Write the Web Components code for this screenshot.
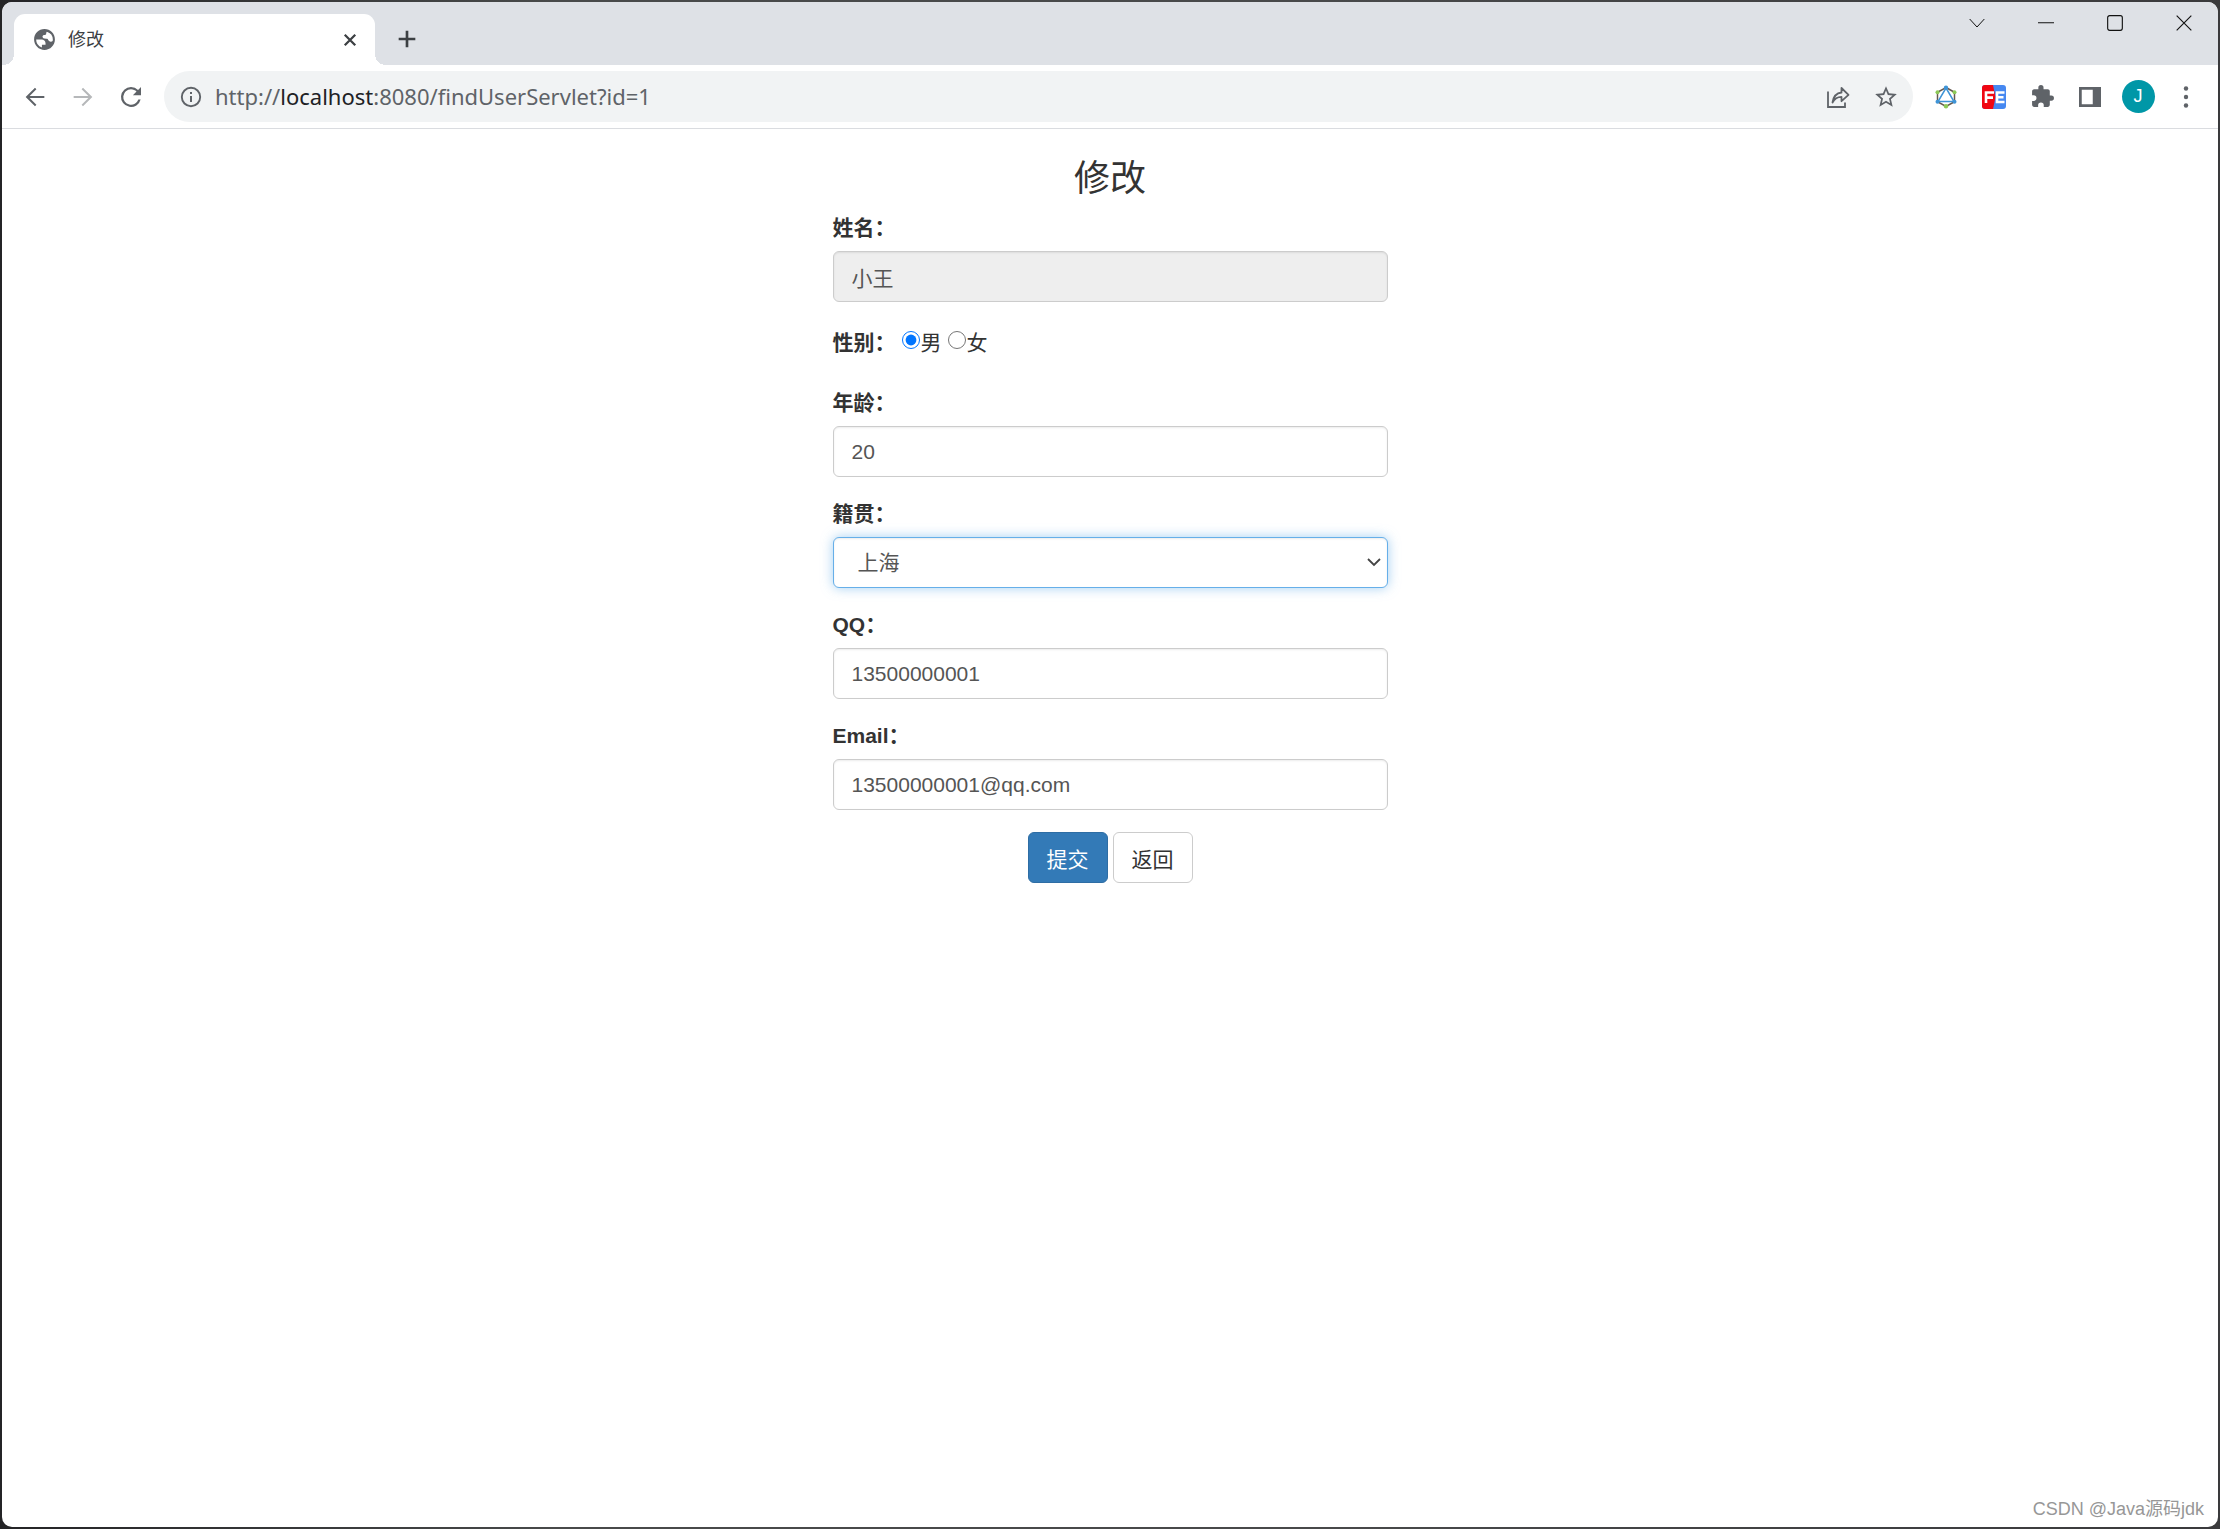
<!DOCTYPE html>
<html lang="zh-CN">
<head>
<meta charset="utf-8">
<title>修改</title>
<style>
  body {
    margin: 0;
    font-family: "Liberation Sans", "Noto Sans CJK SC", sans-serif;
    background: linear-gradient(90deg, #242426, #484a4a 25%, #48494a 60%, #3a3a3c);
  }
</style>
</head>
<body>
<browser-window>
  <tab-strip slot="tabs" label="修改"></tab-strip>
  <tool-bar slot="toolbar"></tool-bar>
  <edit-form>
    <form-field kind="text" label="姓名：" value="小王" readonly></form-field>
    <gender-field></gender-field>
    <form-field kind="text" label="年龄：" value="20"></form-field>
    <form-field kind="select" label="籍贯：" value="上海"></form-field>
    <form-field kind="text" label="QQ：" value="13500000001"></form-field>
    <form-field kind="text" label="Email：" value="13500000001@qq.com"></form-field>
  </edit-form>
  <span slot="mark">CSDN @Java源码jdk</span>
</browser-window>

<script>
const icons = {
  globe: [25, '<path fill="currentColor" d="M12 2C6.48 2 2 6.48 2 12s4.48 10 10 10 10-4.48 10-10S17.52 2 12 2zM4 12h4.4c3.4.02 4.93 1.73 4.6 5.1H9.500v2.500A8 8 0 0 1 4 12zm16 0a8 8 0 0 1-.16 1.500c-.9.9-2.500.8-3.500 0-1-.8-.8-2-1.900-2.200-1.500-.1-2.700 0-3.700-.7-.9-.7-.9-1.900 0-2.600 1-.7 2.300-.2 2.800-1.100.3-.7-.2-1.500.7-2.400A8 8 0 0 1 20 12z"/>'],
  close: [18, '<path d="M5 5l14 14M19 5L5 19" stroke="currentColor" stroke-width="3"/>'],
  plus: [20, '<path d="M2 12h20M12 2v20" stroke="currentColor" stroke-width="3.200"/>'],
  back: [28, '<path fill="currentColor" d="M20 11.150H7.400l5.800-5.800L12 4.100 4 12l8 7.900 1.200-1.200-5.800-5.850H20z"/>'],
  forward: [28, '<path fill="currentColor" d="M4 11.150h12.600l-5.800-5.800L12 4.100 20 12l-8 7.900-1.200-1.200 5.800-5.850H4z"/>'],
  reload: [30, '<path fill="currentColor" d="M17.650 6.350A7.960 7.960 0 0 0 12 4a8 8 0 1 0 7.730 10h-1.850A6.200 6.200 0 1 1 12 5.800c1.750 0 3.300.75 4.420 1.850L13.500 10.500H20V4z"/>'],
  info: [24, '<circle cx="12" cy="12" r="9.200" fill="none" stroke="currentColor" stroke-width="1.900"/><path fill="currentColor" d="M11 11h2v6h-2zM11 7h2v2h-2z"/>'],
  share: [24, '<g fill="none" stroke="currentColor" stroke-width="1.800"><path d="M2 6.500V22h17v-4.500"/><path d="M6.500 17.500C7.500 11 11 8 15.500 7.500V3l7 6.800-7 6.400v-4.300c-4.500 0-7 1.800-9 5.600z" stroke-linejoin="round"/></g>'],
  star: [26, '<path fill="currentColor" d="M22 9.240l-7.190-.62L12 2 9.190 8.630 2 9.240l5.460 4.730L5.820 21 12 17.270 18.180 21l-1.630-7.030zM12 15.400l-3.760 2.270 1-4.280-3.320-2.880 4.380-.38L12 6.100l1.710 4.040 4.380.38-3.320 2.880 1 4.280z"/>'],
  graph: [24, '<path d="M12 2.500l8.500 4.800v9.400L12 21.500l-8.500-4.800V7.300z" fill="none" stroke="#66594f" stroke-width="1.500"/><path d="M12 3L20 16.500H4z" fill="#fff" stroke="#3f94d6" stroke-width="1.500"/><g fill="#3f94d6"><circle cx="12" cy="2.800" r="2.200"/><circle cx="3.500" cy="16.700" r="2"/><circle cx="20.500" cy="16.700" r="2"/></g><g fill="#8cc957"><circle cx="3.500" cy="7.300" r="2"/><circle cx="20.500" cy="7.300" r="2"/><circle cx="12" cy="21.300" r="2.200"/></g>'],
  fe: [24, '<rect width="24" height="24" rx="3" fill="#4688f1"/><path d="M3 0h8l2.500 12L11 24H3a3 3 0 0 1-3-3V3a3 3 0 0 1 3-3z" fill="#f00713"/><path d="M4 18V7.500h8M4 12.600h7M22.500 7.500H15V17h7.500M15 12.300h6.500" fill="none" stroke="#fff" stroke-width="2.600"/>'],
  puzzle: [25, '<path fill="currentColor" d="M20.500 11H19V7c0-1.100-.9-2-2-2h-4V3.500a2.500 2.500 0 0 0-5 0V5H4c-1.100 0-2 .9-2 2v3.800h1.500a2.700 2.700 0 0 1 0 5.400H2V20c0 1.100.9 2 2 2h3.800v-1.500a2.700 2.700 0 0 1 5.400 0V22H17c1.100 0 2-.9 2-2v-4h1.500a2.500 2.500 0 0 0 0-5z"/>'],
  panel: [22, '<path fill="currentColor" fill-rule="evenodd" d="M0 1h24v22H0zM3 4v16h12V4z"/>'],
  dots: [22, '<g fill="currentColor"><circle cx="12" cy="2.800" r="2.400"/><circle cx="12" cy="12" r="2.400"/><circle cx="12" cy="21.200" r="2.400"/></g>'],
  chevron: [16, '<path d="M1 6l11 12L23 6" fill="none" stroke="currentColor" stroke-width="1.500"/>'],
  minimize: [16, '<path d="M0 11.500h24" stroke="currentColor" stroke-width="1.600"/>'],
  maximize: [16, '<rect x="1" y="1" width="22" height="22" rx="3" fill="none" stroke="currentColor" stroke-width="1.700"/>'],
  quit: [16, '<path d="M1 1l22 22M23 1L1 23" stroke="currentColor" stroke-width="1.700"/>'],
  arrow: [12, '<path d="M0 6l12 12L24 6" fill="none" stroke="currentColor" stroke-width="3.600"/>']
};

class Base extends HTMLElement {
  connectedCallback() {
    if (this.shadowRoot) return;
    this.attachShadow({ mode: 'open' }).innerHTML =
      '<style>*, ::before, ::after { box-sizing: border-box; } button { font: inherit; cursor: pointer; }' + this.css() + '</style>' + this.html();
  }
}

customElements.define('ui-icon', class extends Base {
  css() { return ':host { display: inline-flex; flex: none; } svg { display: block; overflow: visible; }'; }
  html() {
    const [size, body] = icons[this.getAttribute('name')];
    return `<svg width="${size}" height="${size}" viewBox="0 0 24 24" aria-hidden="true">${body}</svg>`;
  }
});

customElements.define('icon-button', class extends Base {
  css() {
    return `:host { display: flex; flex: none; width: 48px; height: 48px; color: #5f6368; }
      button { display: flex; flex: 1; align-items: center; justify-content: center; padding: 0; border: 0; background: none; color: inherit; }`;
  }
  html() {
    return `<button type="button" aria-label="${this.getAttribute('label')}"><ui-icon name="${this.getAttribute('icon')}"></ui-icon></button>`;
  }
});

customElements.define('browser-window', class extends Base {
  css() {
    return `:host { display: block; box-sizing: border-box; height: 100vh; padding: 2px; }
      .frame { position: relative; display: flex; flex-direction: column; height: 100%; overflow: hidden; border-radius: 10px; background: #fff; }
      main { flex: 1; }
      .mark { position: absolute; right: 14px; bottom: 4px; font-size: 18px; line-height: 28px; color: #979797; }`;
  }
  html() {
    return `<div class="frame"><slot name="tabs"></slot><slot name="toolbar"></slot><main><slot></slot></main>
      <div class="mark"><slot name="mark"></slot></div></div>`;
  }
});

customElements.define('tab-strip', class extends Base {
  css() {
    return `:host { display: flex; box-sizing: border-box; height: 63px; padding-left: 12px; background: #dee1e6; color: #3c4043; }
      .tab { position: relative; display: flex; align-items: center; width: 361px; margin-top: 12px; padding: 0 1px 0 18px; border-radius: 11px 11px 0 0; background: #fff; }
      .tab::before, .tab::after { content: ""; position: absolute; bottom: 0; width: 11px; height: 11px; }
      .tab::before { left: -11px; background: radial-gradient(circle at 0 0, transparent 11px, #fff 11px); }
      .tab::after { right: -11px; background: radial-gradient(circle at 100% 0, transparent 11px, #fff 11px); }
      .globe { color: #5f6368; }
      .title { flex: 1; margin-left: 11px; font-size: 18px; line-height: 26px; }
      .tab icon-button { color: #3c4043; }
      .new { margin: 13px 0 0 8px; color: #3c4043; }
      .controls { display: flex; margin-left: auto; }
      .controls icon-button { width: 69px; height: 41px; color: #111; }`;
  }
  html() {
    return `<div class="tab" role="tab"><ui-icon class="globe" name="globe"></ui-icon><span class="title">${this.getAttribute('label')}</span>
        <icon-button icon="close" label="关闭标签页"></icon-button></div>
      <icon-button class="new" icon="plus" label="新标签页"></icon-button>
      <div class="controls">
        <icon-button icon="chevron" label="搜索标签页"></icon-button>
        <icon-button icon="minimize" label="最小化"></icon-button>
        <icon-button icon="maximize" label="最大化"></icon-button>
        <icon-button icon="quit" label="关闭"></icon-button>
      </div>`;
  }
});

customElements.define('tool-bar', class extends Base {
  css() {
    return `:host { display: flex; align-items: center; padding: 6px 8px 6px 9px; border-bottom: 1px solid #dadce0; }
      .omnibox { display: flex; flex: 1; align-items: center; height: 51px; margin: 0 9px; padding: 0 3px 0 15px; border-radius: 26px; background: #f1f3f4; color: #5f6368; }
      .url { flex: 1; margin-left: 12px; padding-bottom: 2px; font: 22px/30px "Noto Sans", sans-serif; outline: 0; white-space: nowrap; }
      b { font-weight: 400; color: #202124; }
      .off { color: #b6b8ba; }
      .user { display: flex; justify-content: center; width: 48px; padding: 0; border: 0; background: none; }
      .user span { width: 33px; height: 33px; border-radius: 50%; background: #0097a7; color: #fff; font-size: 18px; line-height: 33px; }`;
  }
  html() {
    return `<icon-button icon="back" label="后退"></icon-button>
      <icon-button class="off" icon="forward" label="前进"></icon-button>
      <icon-button icon="reload" label="刷新"></icon-button>
      <div class="omnibox"><ui-icon name="info"></ui-icon>
        <div class="url" role="textbox" contenteditable="true" spellcheck="false" aria-label="地址栏">http://<b>localhost</b>:8080/findUserServlet?id=1</div>
        <icon-button icon="share" label="分享"></icon-button>
        <icon-button icon="star" label="收藏"></icon-button></div>
      <icon-button icon="graph" label="GraphQL"></icon-button>
      <icon-button icon="fe" label="FeHelper"></icon-button>
      <icon-button icon="puzzle" label="扩展程序"></icon-button>
      <icon-button icon="panel" label="侧边栏"></icon-button>
      <button class="user" type="button"><span>J</span></button>
      <icon-button icon="dots" label="菜单"></icon-button>`;
  }
});

customElements.define('edit-form', class extends Base {
  css() {
    return `:host { display: block; width: 25vw; min-width: 320px; margin: 0 auto; color: #333; }
      h3 { margin: 30px 0 15px; font-size: 36px; line-height: 39px; font-weight: 400; text-align: center; }
      .actions { display: flex; justify-content: center; gap: 5px; }
      .actions button { height: 51px; padding: 0 18px; border: 1px solid #ccc; border-radius: 6px; background: #fff; color: #333; font-size: 21px; }
      .actions .primary { border-color: #2e6da4; background: #337ab7; color: #fff; }`;
  }
  html() {
    return `<h3>修改</h3><form onsubmit="return false"><slot></slot>
      <div class="actions"><button class="primary" type="submit">提交</button><button type="button">返回</button></div></form>`;
  }
});

customElements.define('form-field', class extends Base {
  css() {
    return `:host { display: block; margin-bottom: 22px; font-size: 21px; line-height: 30px; }
      label { display: block; margin-bottom: 8px; font-weight: 700; }
      .box { position: relative; }
      input, select { display: block; width: 100%; height: 51px; padding: 0 18px; border: 1px solid #ccc; border-radius: 6px; outline: 0; background: #fff; color: #555; font: inherit; box-shadow: inset 0 1px 2px rgba(0, 0, 0, .08); }
      input[readonly] { background: #eee; }
      select { appearance: none; padding: 0 24px; border-color: #66afe9; box-shadow: inset 0 1px 2px rgba(0, 0, 0, .08), 0 0 12px rgba(102, 175, 233, .6); }
      ui-icon { position: absolute; right: 8px; top: 19px; pointer-events: none; color: #444; }`;
  }
  html() {
    const value = this.getAttribute('value');
    const control = this.getAttribute('kind') === 'select'
      ? `<select id="control"><option>${value}</option></select><ui-icon name="arrow"></ui-icon>`
      : `<input id="control" type="text" value="${value}" ${this.hasAttribute('readonly') ? 'readonly' : ''}>`;
    return `<label for="control">${this.getAttribute('label')}</label><div class="box">${control}</div>`;
  }
});

customElements.define('gender-field', class extends Base {
  css() {
    return `:host { display: flex; align-items: flex-start; margin-bottom: 22px; padding: 4px 0 8px; font-size: 21px; line-height: 30px; }
      .name { margin-right: 6px; font-weight: 700; }
      label { display: flex; align-items: flex-start; margin-right: 6px; }
      input { width: 18px; height: 18px; margin: 3px 1px 0 0; accent-color: #0075ff; }`;
  }
  html() {
    return `<span class="name">性别：</span>
      <label><input type="radio" name="gender" checked>男</label>
      <label><input type="radio" name="gender">女</label>`;
  }
});
</script>
</body>
</html>
